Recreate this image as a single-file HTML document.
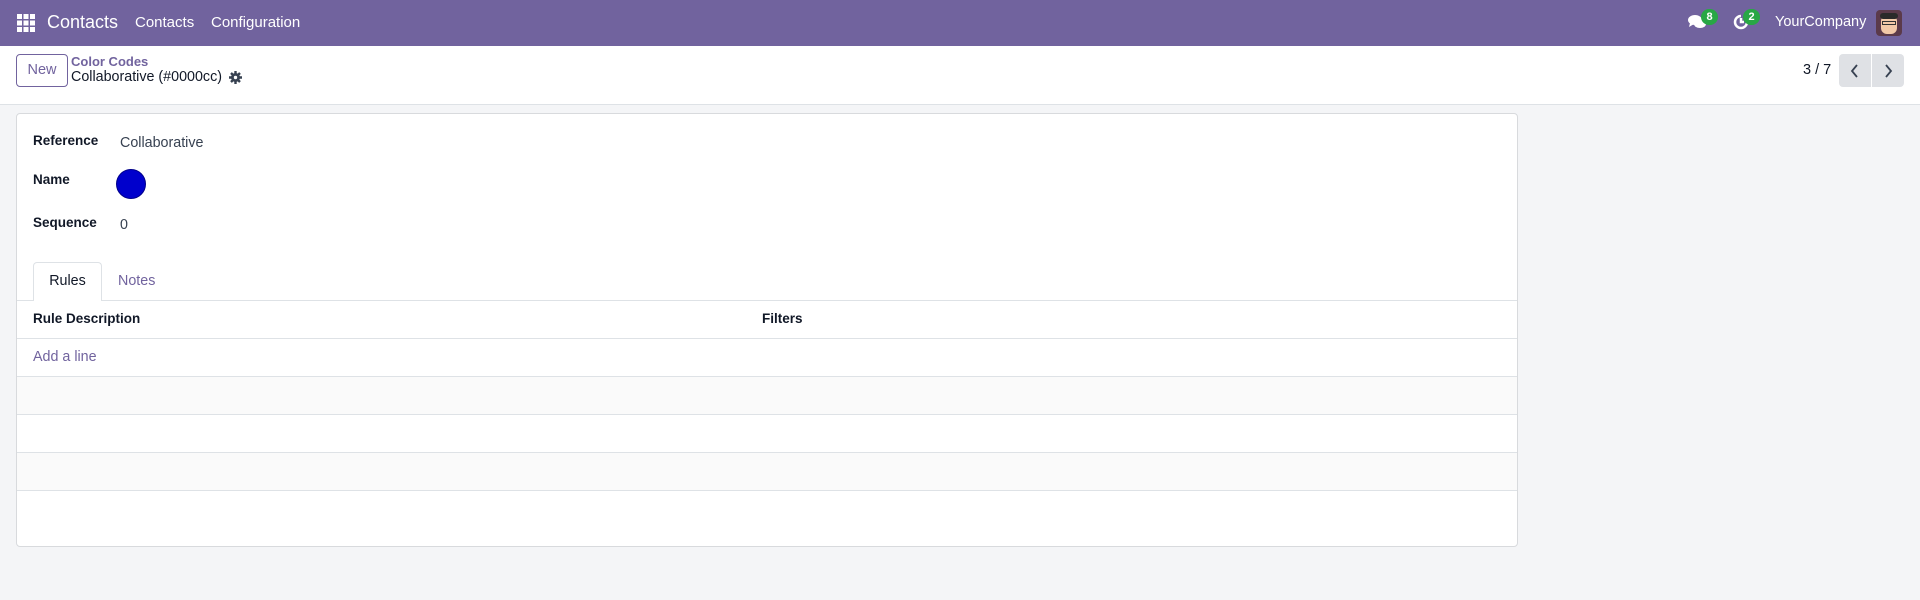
<!DOCTYPE html>
<html><head><meta charset="utf-8"><style>
*{box-sizing:border-box;margin:0;padding:0}
body{width:1920px;height:600px;background:#f4f5f7;font-family:"Liberation Sans",sans-serif;color:#374151;position:relative;overflow:hidden;font-size:14.3px}
.nav{position:absolute;left:0;top:0;width:1920px;height:46px;background:#71639e;color:#fff}
.a{position:absolute;white-space:nowrap}
.cp{position:absolute;left:0;top:46px;width:1920px;height:59px;background:#fff;border-bottom:1px solid #dee2e6}
.card{position:absolute;left:16px;top:113px;width:1502px;height:434px;background:#fff;border:1px solid #d8dadd;border-radius:4px;overflow:hidden}
.lbl{font-weight:bold;color:#111827;font-size:13.5px}
.row{position:absolute;left:0;width:1500px;border-top:1px solid #dee2e6}
.badge{position:absolute;background:#28a745;color:#fff;font-size:11px;font-weight:bold;border-radius:9px;height:16px;min-width:17px;text-align:center;line-height:16px}
</style></head><body>
<div class="nav">
  <svg class="a" style="left:17px;top:14px" width="18" height="18" viewBox="0 0 18 18" fill="#fff"><rect x="0" y="0" width="5" height="5"/><rect x="6.5" y="0" width="5" height="5"/><rect x="13" y="0" width="5" height="5"/><rect x="0" y="6.5" width="5" height="5"/><rect x="6.5" y="6.5" width="5" height="5"/><rect x="13" y="6.5" width="5" height="5"/><rect x="0" y="13" width="5" height="5"/><rect x="6.5" y="13" width="5" height="5"/><rect x="13" y="13" width="5" height="5"/></svg>
  <div class="a" style="left:47px;top:12px;font-size:18px">Contacts</div>
  <div class="a" style="left:135px;top:14px;font-size:15px">Contacts</div>
  <div class="a" style="left:211px;top:14px;font-size:15px">Configuration</div>
  <svg class="a" style="left:1688px;top:14px" width="18" height="16" viewBox="0 0 18 16" fill="#fff"><ellipse cx="7" cy="6" rx="7" ry="5"/><path d="M2 9 L1 13 L6 10Z"/><ellipse cx="12" cy="10" rx="6" ry="4"/></svg>
  <div class="badge" style="left:1701px;top:9px">8</div>
  <svg class="a" style="left:1732px;top:13px" width="18" height="18" viewBox="0 0 18 18" fill="none" stroke="#fff" stroke-width="2.5"><path d="M15 9a6 6 0 1 1-6-6"/><path d="M9 5v4h3"/></svg>
  <div class="badge" style="left:1743px;top:9px">2</div>
  <div class="a" style="left:1775px;top:14px;font-size:14.5px">YourCompany</div>
  <div class="a" style="left:1876px;top:10px;width:26px;height:26px;background:#5b3a4a;border-radius:4px;overflow:hidden">
    <div style="position:absolute;left:5px;top:5px;width:16px;height:19px;background:#f2c9a8;border-radius:6px"></div>
    <div style="position:absolute;left:4px;top:3px;width:18px;height:6px;background:#2a2a2a;border-radius:3px"></div>
    <div style="position:absolute;left:6px;top:11px;width:14px;height:4px;border:1px solid #333"></div>
  </div>
</div>
<div class="cp">
  <div class="a" style="left:16px;top:8px;width:52px;height:33px;border:1px solid #71639e;border-radius:4px;color:#71639e;font-size:14.5px;text-align:center;line-height:31px">New</div>
  <div class="a" style="left:71px;top:8px;font-size:13px;font-weight:bold;color:#71639e">Color Codes</div>
  <div class="a" style="left:71px;top:23px;font-size:14.3px;color:#111827">Collaborative (#0000cc)</div>
  <svg class="a" style="left:229px;top:25px" width="13" height="13" viewBox="0 0 13 13"><circle cx="6.5" cy="6.5" r="4.5" fill="#374151"/><g stroke="#374151" stroke-width="2.4"><path d="M6.5 0v13M0 6.5h13M2 2l9 9M11 2l-9 9"/></g><circle cx="6.5" cy="6.5" r="1.7" fill="#fff"/></svg>
  <div class="a" style="left:1803px;top:16px;font-size:14.5px;color:#111827">3 / 7</div>
  <div class="a" style="left:1839px;top:8px;width:65px;height:33px;background:#dfe1e5;border-radius:4px"></div>
  <div class="a" style="left:1871px;top:8px;width:1px;height:33px;background:#fff"></div>
  <svg class="a" style="left:1849px;top:17px" width="12" height="16" viewBox="0 0 12 16" fill="none" stroke="#374151" stroke-width="1.8"><path d="M8 2L3 8l5 6"/></svg>
  <svg class="a" style="left:1882px;top:17px" width="12" height="16" viewBox="0 0 12 16" fill="none" stroke="#374151" stroke-width="1.8"><path d="M4 2l5 6-5 6"/></svg>
</div>
<div class="card">
  <div class="a lbl" style="left:16px;top:19px">Reference</div>
  <div class="a" style="left:103px;top:21px">Collaborative</div>
  <div class="a lbl" style="left:16px;top:58px">Name</div>
  <div class="a" style="left:99px;top:55px;width:30px;height:30px;border-radius:50%;background:#0000cc;border:1px solid #00008a"></div>
  <div class="a lbl" style="left:16px;top:101px">Sequence</div>
  <div class="a" style="left:103px;top:103px">0</div>
  <div class="a" style="left:16px;top:148px;width:69px;height:39px;border:1px solid #dee2e6;border-bottom:none;border-radius:4px 4px 0 0;background:#fff;z-index:2;text-align:center;line-height:37px;color:#111827">Rules</div>
  <div class="a" style="left:101px;top:159px;color:#71639e">Notes</div>
  <div class="row" style="top:186px;height:38px"></div>
  <div class="a lbl" style="left:16px;top:197px">Rule Description</div>
  <div class="a lbl" style="left:745px;top:197px">Filters</div>
  <div class="row" style="top:224px;height:38px"></div>
  <div class="a" style="left:16px;top:235px;color:#71639e">Add a line</div>
  <div class="row" style="top:262px;height:38px;background:#fafafa"></div>
  <div class="row" style="top:300px;height:38px"></div>
  <div class="row" style="top:338px;height:38px;background:#fafafa"></div>
  <div class="row" style="top:376px;height:1px"></div>
</div>
</body></html>
